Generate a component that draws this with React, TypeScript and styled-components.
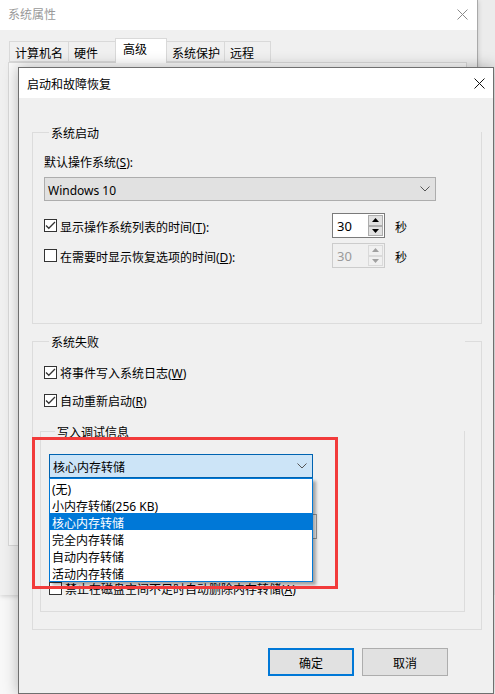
import React from "react";
import styled, { createGlobalStyle, css } from "styled-components";

const FONT = `"Noto Sans", "Noto Sans CJK SC", sans-serif`;

const GlobalStyle = createGlobalStyle`
  html, body { margin: 0; padding: 0; }
  body { background: #ececec; font-family: ${FONT}; }
  * { box-sizing: border-box; }
`;

/* 16px text line whose glyphs sit 2px lower, like Microsoft YaHei UI */
const lowered = css`
  height: 16px;
  line-height: 12px;
  padding-top: 4px;
`;

const Desktop = styled.div`
  position: relative;
  width: 495px;
  height: 694px;
  overflow: hidden;
  background: linear-gradient(to bottom, #ececec 0, #ececec 595px, #f8f8f8 595px);
  font-family: ${FONT};
  font-size: 12px;
  color: #000;
`;

/* ---------- background window ---------- */
const BackWindow = styled.div`
  position: absolute;
  left: 0;
  top: 0;
  width: 478px;
  height: 595px;
  background: #f0f0f0;
  border-right: 1px solid #a9a9a9;
  box-shadow: 0 1px 5px rgba(0, 0, 0, 0.18);
  display: flex;
  flex-direction: column;
`;

const BackTitleBar = styled.div`
  height: 30px;
  flex: 0 0 30px;
  background: #fff;
  display: flex;
  align-items: center;
  justify-content: space-between;
  padding-left: 8px;
  color: #999;
  line-height: 16px;
  padding-bottom: 1px;
`;

const DialogTitleBar = styled.div`
  height: 30px;
  flex: 0 0 30px;
  background: #fff;
  display: flex;
  align-items: center;
  justify-content: space-between;
  padding-left: 8px;
`;

const TitleText = styled.span`
  ${lowered}
  white-space: nowrap;
`;

const CloseBtn = styled.div<{ $w: number }>`
  width: ${(p) => p.$w}px;
  height: 100%;
  display: flex;
  align-items: center;
  justify-content: center;
`;

const TabRow = styled.div`
  margin-top: 8px;
  height: 24px;
  padding-left: 9px;
  display: flex;
  align-items: flex-end;
  position: relative;
  z-index: 1;
`;

const Tab = styled.div<{ $w: number; $active?: boolean }>`
  width: ${(p) => p.$w}px;
  height: ${(p) => (p.$active ? 25 : 21)}px;
  margin-left: -1px;
  margin-bottom: ${(p) => (p.$active ? -1 : 0)}px;
  border: 1px solid #d9d9d9;
  border-bottom: ${(p) => (p.$active ? "none" : "1px solid #d9d9d9")};
  background: ${(p) => (p.$active ? "#ffffff" : "#f0f0f0")};
  padding-left: ${(p) => (p.$active ? 7 : 5)}px;
  padding-top: ${(p) => (p.$active ? 3 : 4)}px;
  line-height: 16px;
  white-space: nowrap;
  position: relative;
  z-index: ${(p) => (p.$active ? 2 : 1)};
  &:first-child {
    margin-left: 0;
  }
`;

const TabPanel = styled.div`
  margin: 0 10px 0 8px;
  height: 484px;
  border: 1px solid #d9d9d9;
  background: #fafafa;
`;

/* ---------- front dialog ---------- */
const Dialog = styled.div`
  position: absolute;
  left: 18px;
  top: 67px;
  width: 476px;
  height: 627px;
  border: 1px solid #6f6f6f;
  background: #f0f0f0;
  display: flex;
  flex-direction: column;
  box-shadow: 0 0 14px rgba(0, 0, 0, 0.28);
  z-index: 2;
`;

const DialogBody = styled.div`
  flex: 1;
  padding: 0 11px 0 13px;
  display: flex;
  flex-direction: column;
`;

const GroupBox = styled.div<{ $mt: number; $pl: number; $pr: number; $pb: number; $ml?: number }>`
  margin-top: ${(p) => p.$mt}px;
  margin-left: ${(p) => p.$ml ?? 0}px;
  border: 1px solid #dcdcdc;
  padding: 0 ${(p) => p.$pr}px ${(p) => p.$pb}px ${(p) => p.$pl}px;
  display: flex;
  flex-direction: column;
`;

const Legend = styled.div<{ $ml: number }>`
  display: table;
  margin-top: -9px;
  margin-left: ${(p) => p.$ml}px;
  padding-left: 2px;
  padding-right: 2px;
  ${lowered}
  background: #f0f0f0;
  white-space: nowrap;
`;

const FieldLabel = styled.div<{ $mt: number }>`
  margin-top: ${(p) => p.$mt}px;
  ${lowered}
  white-space: nowrap;
`;

const SelectSlot = styled.div<{ $mt: number }>`
  margin-top: ${(p) => p.$mt}px;
`;

const SelectBox = styled.div<{ $w: number; $focused?: boolean }>`
  width: ${(p) => p.$w}px;
  height: 24px;
  border: 1px solid ${(p) => (p.$focused ? "#0063b1" : "#adadad")};
  background: ${(p) => (p.$focused ? "#cce4f7" : "#e1e1e1")};
  display: flex;
  align-items: center;
  justify-content: space-between;
  padding: 0 5px 0 3px;
  white-space: nowrap;
`;

const SelectText = styled.span`
  ${lowered}
`;

const ComboWrap = styled.div<{ $mt: number }>`
  position: relative;
  margin-top: ${(p) => p.$mt}px;
  width: 264px;
  z-index: 5;
`;

const DropList = styled.div`
  position: absolute;
  top: 24px;
  left: 0;
  width: 264px;
  height: 104px;
  border: 1px solid #0078d7;
  background: #fff;
  box-shadow: 3px 3px 3px rgba(0, 0, 0, 0.32);
  display: flex;
  flex-direction: column;
`;

const DropItem = styled.div<{ $selected?: boolean }>`
  height: 17px;
  line-height: 13px;
  padding-top: 4px;
  padding-left: 2px;
  white-space: nowrap;
  background: ${(p) => (p.$selected ? "#0078d7" : "transparent")};
  color: ${(p) => (p.$selected ? "#fff" : "#000")};
`;

const SpinRow = styled.div<{ $mt: number }>`
  margin-top: ${(p) => p.$mt}px;
  height: 25px;
  display: flex;
  align-items: center;
`;

const CheckRow = styled.div<{ $mt: number; $w?: number }>`
  margin-top: ${(p) => p.$mt}px;
  height: 16px;
  width: ${(p) => (p.$w ? `${p.$w}px` : "auto")};
  flex: 0 0 auto;
  display: flex;
  align-items: center;
  gap: 3px;
  white-space: nowrap;
`;

const CheckText = styled.span`
  ${lowered}
`;

const CheckBox = styled.div`
  width: 13px;
  height: 13px;
  flex: 0 0 13px;
  border: 1px solid #333;
  background: #fff;
  display: flex;
  align-items: center;
  justify-content: center;
`;

const SpinBox = styled.div<{ $disabled?: boolean }>`
  width: 53px;
  height: 25px;
  display: flex;
  border: 1px solid ${(p) => (p.$disabled ? "#cccccc" : "#7a7a7a")};
  background: ${(p) => (p.$disabled ? "#f0f0f0" : "#fff")};
`;

const SpinValue = styled.div<{ $disabled?: boolean }>`
  flex: 1;
  padding-left: 4px;
  padding-top: 2px;
  line-height: 21px;
  font-size: 13px;
  color: ${(p) => (p.$disabled ? "#9a9a9a" : "#000")};
`;

const SpinButtons = styled.div<{ $disabled?: boolean }>`
  width: 17px;
  display: flex;
  flex-direction: column;
  background: ${(p) => (p.$disabled ? "#f0f0f0" : "#fff")};
  padding: 1px;
`;

const SpinBtn = styled.div<{ $disabled?: boolean }>`
  flex: 1;
  border: 1px solid ${(p) => (p.$disabled ? "#dadada" : "#adadad")};
  background: ${(p) => (p.$disabled ? "#f0f0f0" : "#e1e1e1")};
  display: flex;
  align-items: center;
  justify-content: center;
  color: ${(p) => (p.$disabled ? "#a0a0a0" : "#000")};
`;

const Unit = styled.div`
  margin-left: 10px;
  ${lowered}
`;

const TextBox = styled.div<{ $mt: number }>`
  margin-top: ${(p) => p.$mt}px;
  width: 268px;
  height: 25px;
  border: 1px solid #9a9a9a;
  background: #f7f7f7;
  padding-left: 3px;
  line-height: 23px;
  white-space: nowrap;
`;

const ButtonRow = styled.div`
  margin-top: 18px;
  padding-right: 34px;
  display: flex;
  justify-content: flex-end;
  gap: 8px;
`;

const Button = styled.div<{ $default?: boolean }>`
  width: 86px;
  height: 28px;
  border: ${(p) => (p.$default ? "2px solid #0078d7" : "1px solid #adadad")};
  background: #e1e1e1;
  display: flex;
  align-items: center;
  justify-content: center;
  padding-top: 4px;
  line-height: 16px;
`;

const Annotation = styled.div`
  position: absolute;
  left: 13px;
  top: 369px;
  width: 306px;
  height: 152px;
  border: 3px solid #f23b3b;
  pointer-events: none;
  z-index: 10;
`;

/* ---------- icons ---------- */
const CloseIcon = ({ color }: { color: string }) => (
  <svg width="11" height="11" viewBox="0 0 11 11">
    <path d="M0.5 0.5 L10.5 10.5 M10.5 0.5 L0.5 10.5" stroke={color} strokeWidth="1" fill="none" />
  </svg>
);

const Chevron = () => (
  <svg width="10" height="6" viewBox="0 0 10 6">
    <polyline points="0.5,0.5 5,5 9.5,0.5" stroke="#555" strokeWidth="1" fill="none" />
  </svg>
);

const Check = () => (
  <svg width="11" height="11" viewBox="0 0 11 11">
    <polyline points="1,5.5 3.8,8.3 10,2" stroke="#333" strokeWidth="1.3" fill="none" />
  </svg>
);

const Tri = ({ up }: { up?: boolean }) => (
  <svg width="7" height="4" viewBox="0 0 7 4">
    <polygon points={up ? "3.5,0 7,4 0,4" : "0,0 7,0 3.5,4"} fill="currentColor" />
  </svg>
);

const Spin = ({ value, disabled }: { value: string; disabled?: boolean }) => (
  <SpinBox $disabled={disabled}>
    <SpinValue $disabled={disabled}>{value}</SpinValue>
    <SpinButtons $disabled={disabled}>
      <SpinBtn $disabled={disabled}>
        <Tri up />
      </SpinBtn>
      <SpinBtn $disabled={disabled}>
        <Tri />
      </SpinBtn>
    </SpinButtons>
  </SpinBox>
);

const Checkbox = ({ checked }: { checked?: boolean }) => (
  <CheckBox>{checked ? <Check /> : null}</CheckBox>
);

const tabs: { label: string; w: number; active?: boolean }[] = [
  { label: "计算机名", w: 60 },
  { label: "硬件", w: 48 },
  { label: "高级", w: 52, active: true },
  { label: "系统保护", w: 59 },
  { label: "远程", w: 47 },
];

const dumpOptions = ["(无)", "小内存转储(256 KB)", "核心内存转储", "完全内存转储", "自动内存转储", "活动内存转储"];

export default function App() {
  return (
    <>
      <GlobalStyle />
      <Desktop>
        <BackWindow>
          <BackTitleBar>
            <span>系统属性</span>
            <CloseBtn $w={30}>
              <CloseIcon color="#8a8a8a" />
            </CloseBtn>
          </BackTitleBar>
          <TabRow>
            {tabs.map((t) => (
              <Tab key={t.label} $w={t.w} $active={t.active}>
                {t.label}
              </Tab>
            ))}
          </TabRow>
          <TabPanel />
        </BackWindow>

        <Dialog>
          <DialogTitleBar>
            <TitleText>启动和故障恢复</TitleText>
            <CloseBtn $w={28}>
              <CloseIcon color="#111" />
            </CloseBtn>
          </DialogTitleBar>
          <DialogBody>
            <GroupBox $mt={34} $pl={11} $pr={0} $pb={55}>
              <Legend $ml={5}>系统启动</Legend>
              <FieldLabel $mt={13}>
                默认操作系统(<u>S</u>):
              </FieldLabel>
              <SelectSlot $mt={8}>
                <SelectBox $w={392}>
                  <SelectText>Windows 10</SelectText>
                  <Chevron />
                </SelectBox>
              </SelectSlot>
              <SpinRow $mt={12}>
                <CheckRow $mt={0} $w={288}>
                  <Checkbox checked />
                  <CheckText>
                    显示操作系统列表的时间(<u>T</u>):
                  </CheckText>
                </CheckRow>
                <Spin value="30" />
                <Unit>秒</Unit>
              </SpinRow>
              <SpinRow $mt={5}>
                <CheckRow $mt={0} $w={288}>
                  <Checkbox />
                  <CheckText>
                    在需要时显示恢复选项的时间(<u>D</u>):
                  </CheckText>
                </CheckRow>
                <Spin value="30" disabled />
                <Unit>秒</Unit>
              </SpinRow>
            </GroupBox>

            <GroupBox $mt={17} $pl={11} $pr={16} $pb={17}>
              <Legend $ml={5}>系统失败</Legend>
              <CheckRow $mt={15}>
                <Checkbox checked />
                <CheckText>
                  将事件写入系统日志(<u>W</u>)
                </CheckText>
              </CheckRow>
              <CheckRow $mt={12}>
                <Checkbox checked />
                <CheckText>
                  自动重新启动(<u>R</u>)
                </CheckText>
              </CheckRow>

              <GroupBox $mt={23} $ml={-4} $pl={8} $pr={0} $pb={15}>
                <Legend $ml={6}>写入调试信息</Legend>
                <ComboWrap $mt={15}>
                  <SelectBox $w={264} $focused>
                    <SelectText>核心内存转储</SelectText>
                    <Chevron />
                  </SelectBox>
                  <DropList>
                    {dumpOptions.map((o) => (
                      <DropItem key={o} $selected={o === "核心内存转储"}>
                        {o}
                      </DropItem>
                    ))}
                  </DropList>
                </ComboWrap>
                <FieldLabel $mt={16}>转储文件:</FieldLabel>
                <TextBox $mt={4}>%SystemRoot%\MEMORY.DMP</TextBox>
                <CheckRow $mt={15}>
                  <Checkbox checked />
                  <CheckText>
                    覆盖任何现有文件(<u>O</u>)
                  </CheckText>
                </CheckRow>
                <CheckRow $mt={10}>
                  <Checkbox />
                  <CheckText>
                    禁止在磁盘空间不足时自动删除内存转储(<u>A</u>)
                  </CheckText>
                </CheckRow>
              </GroupBox>
            </GroupBox>

            <ButtonRow>
              <Button $default>确定</Button>
              <Button>取消</Button>
            </ButtonRow>
          </DialogBody>
          <Annotation />
        </Dialog>
      </Desktop>
    </>
  );
}
